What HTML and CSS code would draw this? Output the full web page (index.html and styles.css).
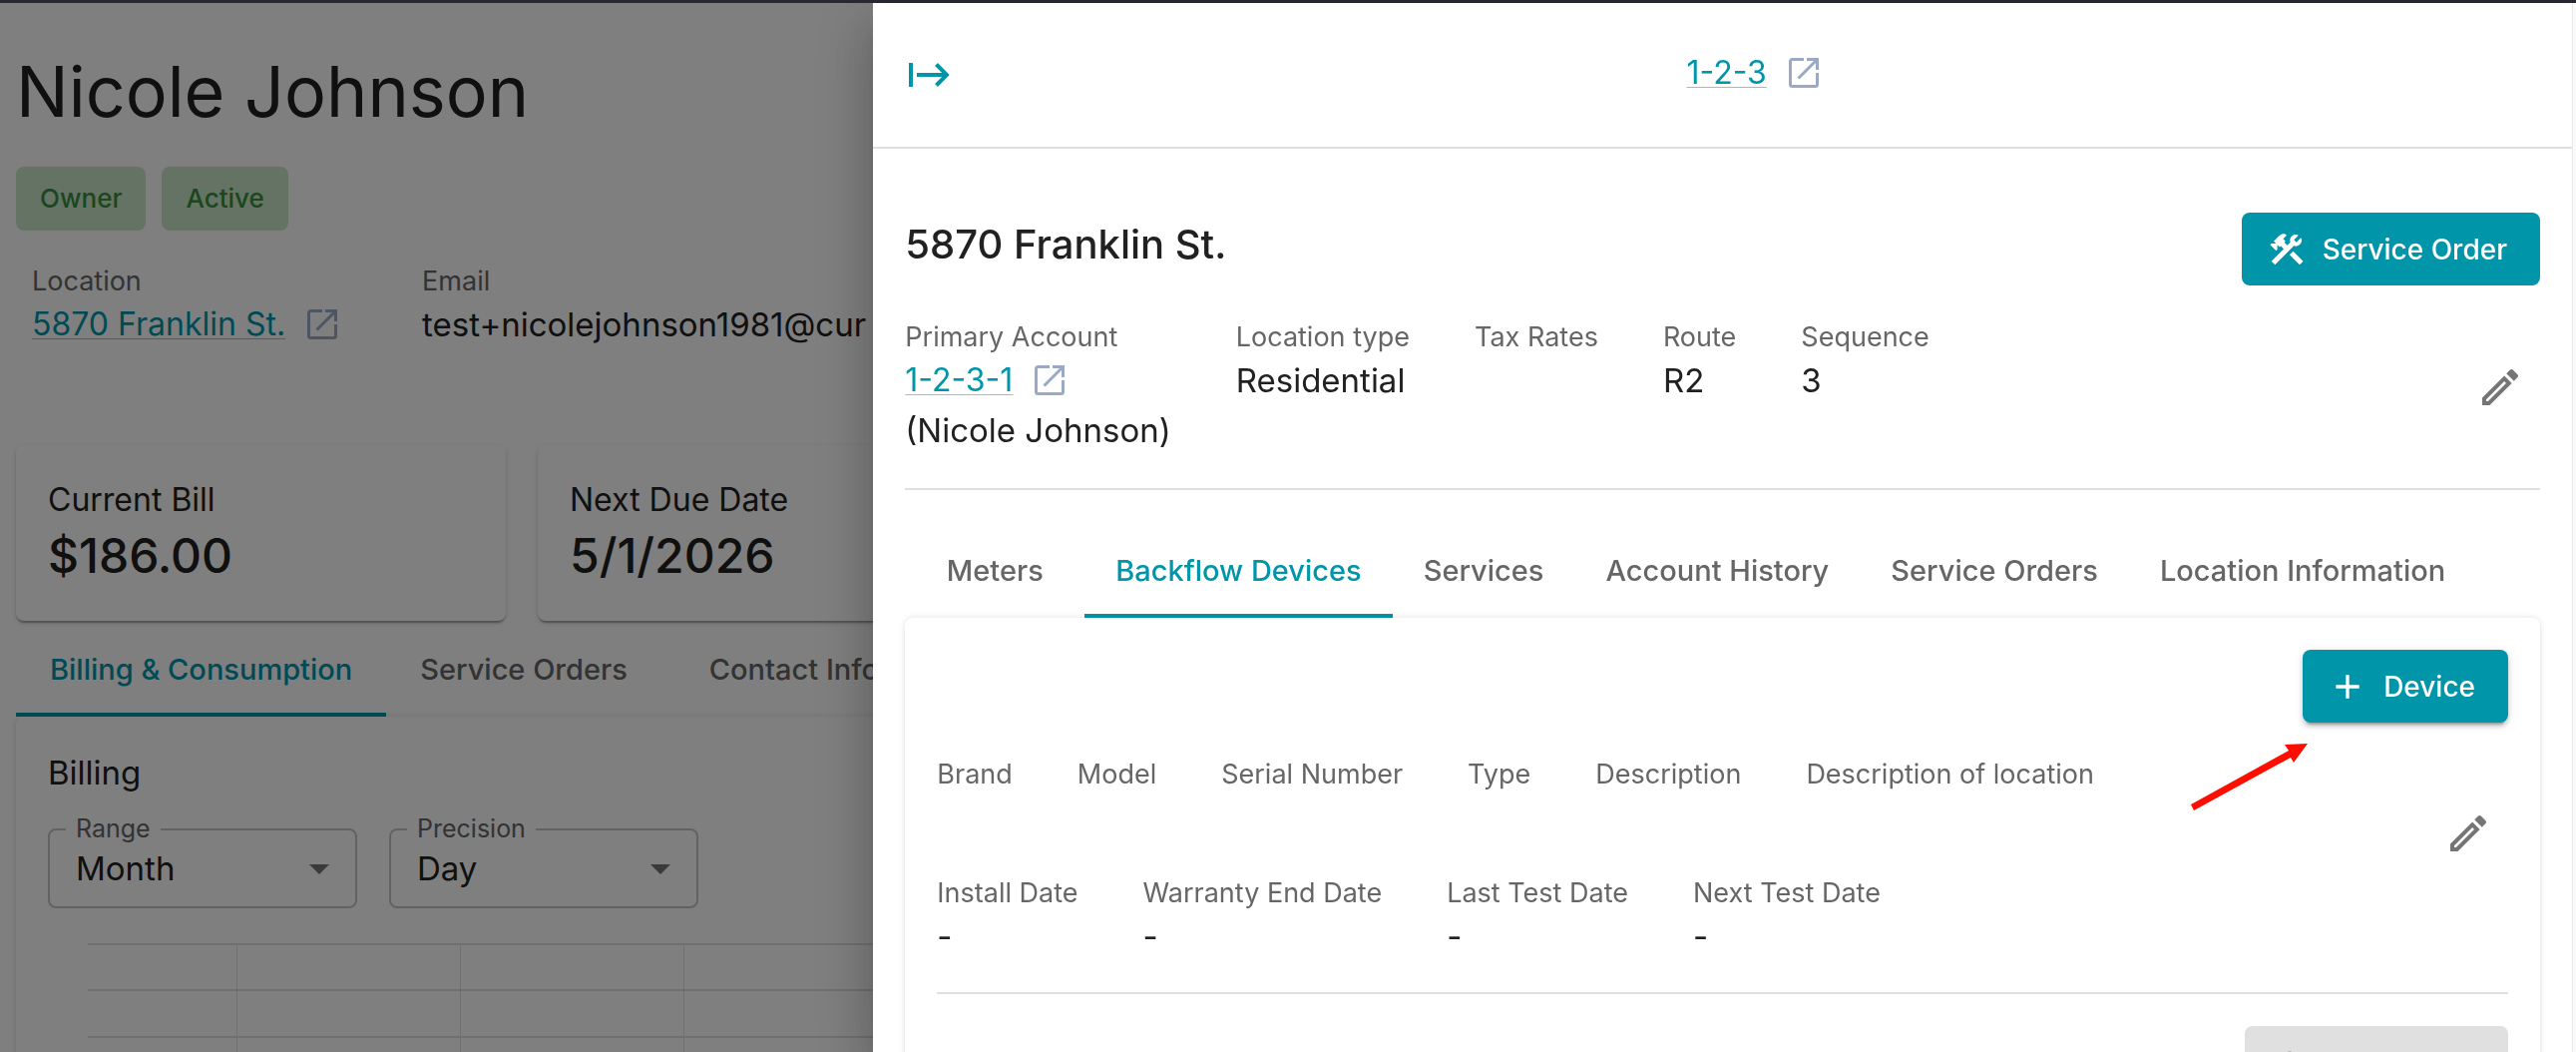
FILE: index.html
```html
<!DOCTYPE html>
<html lang="en">
<head>
	<meta charset="UTF-8">
	<title>Nicole Johnson</title>
	<link rel="stylesheet" href="styles.css">
</head>
<body>
<!-- shared icons -->
<svg class="sprite" aria-hidden="true">
	<symbol id="icon-open" viewBox="0 0 30 30">
		<path fill="none" stroke="currentColor" stroke-width="3" d="M15 1.5H3.5a2 2 0 0 0-2 2v23a2 2 0 0 0 2 2h23a2 2 0 0 0 2-2V15M18 1.5h10.5V12M28 2 9.5 20.5"/>
	</symbol>
	<symbol id="icon-edit" viewBox="0 0 24 24">
		<path fill="currentColor" d="m14.06 9.02.92.92L5.92 19H5v-.92l9.06-9.06M17.66 3c-.25 0-.51.1-.7.29l-1.83 1.83 3.75 3.75 1.83-1.83c.39-.39.39-1.02 0-1.41l-2.34-2.34c-.2-.2-.45-.29-.71-.29zm-3.6 3.19L3 17.25V21h3.75L17.81 9.94l-3.75-3.75z"/>
	</symbol>
	<symbol id="icon-plus" viewBox="0 0 24 24">
		<path fill="currentColor" d="M19 13h-6v6h-2v-6H5v-2h6V5h2v6h6v2z"/>
	</symbol>
	<symbol id="icon-down" viewBox="0 0 20 10">
		<path fill="currentColor" d="M0 0h20L10 10z"/>
	</symbol>
</svg>

<div class="page">
	<main class="account">
		<h1 class="name">Nicole Johnson</h1>
		<div class="chips">
			<span class="chip">Owner</span>
			<span class="chip">Active</span>
		</div>
		<div class="facts account-facts">
			<div class="fact">
				<div class="label">Location</div>
				<div class="value linked"><a href="#">5870 Franklin St.</a><svg class="open"><use href="#icon-open"/></svg></div>
			</div>
			<div class="fact">
				<div class="label">Email</div>
				<div class="value">test+nicolejohnson1981@cur</div>
			</div>
		</div>
		<div class="cards">
			<div class="card">
				<div class="card-title">Current Bill</div>
				<div class="card-value">$186.00</div>
			</div>
			<div class="card">
				<div class="card-title">Next Due Date</div>
				<div class="card-value">5/1/2026</div>
			</div>
		</div>
		<div class="tabs" role="tablist">
			<button class="tab current" role="tab">Billing &amp; Consumption</button>
			<button class="tab" role="tab">Service Orders</button>
			<button class="tab contact" role="tab">Contact Info</button>
		</div>
		<section class="panel billing">
			<h2 class="billing-title">Billing</h2>
			<div class="selects">
				<div class="select">
					<label for="range">Range</label>
					<select id="range"><option>Month</option></select>
					<svg class="down"><use href="#icon-down"/></svg>
				</div>
				<div class="select">
					<label for="precision">Precision</label>
					<select id="precision"><option>Day</option></select>
					<svg class="down"><use href="#icon-down"/></svg>
				</div>
			</div>
			<svg class="chart">
				<g class="rows">
					<line x1="0" x2="100%" y1="1" y2="1"/>
					<line x1="0" x2="100%" y1="47" y2="47"/>
					<line x1="0" x2="100%" y1="94" y2="94"/>
				</g>
				<g class="cols">
					<line x1="149.5" x2="149.5" y1="0" y2="100%"/>
					<line x1="373.5" x2="373.5" y1="0" y2="100%"/>
					<line x1="597.5" x2="597.5" y1="0" y2="100%"/>
				</g>
			</svg>
		</section>
	</main>
</div>

<div class="backdrop"></div>

<aside class="drawer">
	<div class="drawer-main">
		<header class="drawer-head">
			<button class="collapse" aria-label="Close">
				<svg viewBox="0 0 40 24"><path fill="none" stroke="currentColor" stroke-width="4" d="M2 0v24M8 12h30M27.5 1.5 38 12 27.5 22.5"/></svg>
			</button>
			<div class="value linked head-link"><a href="#">1-2-3</a><svg class="open"><use href="#icon-open"/></svg></div>
		</header>
		<div class="drawer-body">
			<div class="title-row">
				<h2 class="title">5870 Franklin St.</h2>
				<button class="btn">
					<svg class="btn-icon" viewBox="0 0 24 24">
						<path fill="currentColor" d="m13.783 15.172 2.121-2.121 5.996 5.996-2.121 2.121z"/>
						<path fill="currentColor" d="M17.5 10c1.93 0 3.5-1.57 3.5-3.5 0-.58-.16-1.12-.41-1.6l-2.7 2.7-1.49-1.49 2.7-2.7c-.48-.25-1.02-.41-1.6-.41C15.57 3 14 4.57 14 6.5c0 .41.08.8.21 1.16l-1.85 1.85-1.78-1.78.71-.71-1.41-1.41L12 3.49c-1.17-1.17-3.07-1.17-4.24 0L4.22 7.03l1.41 1.41H2.81l-.71.71 3.54 3.54.71-.71V9.15l1.41 1.41.71-.71 1.78 1.78-7.41 7.41 2.12 2.12L16.34 9.79c.36.13.75.21 1.16.21z"/>
					</svg>
					Service Order
				</button>
			</div>
			<div class="info-row">
				<div class="facts">
					<div class="fact">
						<div class="label">Primary Account</div>
						<div class="value linked"><a href="#">1-2-3-1</a><svg class="open"><use href="#icon-open"/></svg></div>
						<div class="value">(Nicole Johnson)</div>
					</div>
					<div class="fact">
						<div class="label">Location type</div>
						<div class="value">Residential</div>
					</div>
					<div class="fact">
						<div class="label">Tax Rates</div>
					</div>
					<div class="fact">
						<div class="label">Route</div>
						<div class="value">R2</div>
					</div>
					<div class="fact">
						<div class="label">Sequence</div>
						<div class="value">3</div>
					</div>
				</div>
				<button class="edit" aria-label="Edit location"><svg><use href="#icon-edit"/></svg></button>
			</div>
			<hr>
			<div class="tabs drawer-tabs" role="tablist">
				<button class="tab" role="tab">Meters</button>
				<button class="tab current" role="tab">Backflow Devices</button>
				<button class="tab" role="tab">Services</button>
				<button class="tab" role="tab">Account History</button>
				<button class="tab" role="tab">Service Orders</button>
				<button class="tab" role="tab">Location Information</button>
			</div>
			<section class="panel devices">
				<button class="btn raised"><svg class="btn-icon"><use href="#icon-plus"/></svg>Device</button>
				<svg class="pointer" viewBox="0 0 117 67"><path fill="#ff0d00" d="M0 61 98 7 94 1 117 0 103 19 100 14 3 67z"/></svg>
				<div class="device">
					<div class="device-facts">
						<div class="facts">
							<div class="fact"><div class="label">Brand</div></div>
							<div class="fact"><div class="label">Model</div></div>
							<div class="fact"><div class="label">Serial Number</div></div>
							<div class="fact"><div class="label">Type</div></div>
							<div class="fact"><div class="label">Description</div></div>
							<div class="fact"><div class="label">Description of location</div></div>
						</div>
						<div class="facts">
							<div class="fact"><div class="label">Install Date</div><div class="value">-</div></div>
							<div class="fact"><div class="label">Warranty End Date</div><div class="value">-</div></div>
							<div class="fact"><div class="label">Last Test Date</div><div class="value">-</div></div>
							<div class="fact"><div class="label">Next Test Date</div><div class="value">-</div></div>
						</div>
					</div>
					<button class="edit" aria-label="Edit device"><svg><use href="#icon-edit"/></svg></button>
				</div>
				<hr>
				<button class="btn disabled" aria-label="Add" disabled><svg class="btn-icon"><use href="#icon-plus"/></svg></button>
			</section>
		</div>
	</div>
	<div class="track"></div>
</aside>
</body>
</html>
```

FILE: styles.css
```css
*{box-sizing: border-box;}
body{
margin: 0;height: 100vh;overflow: hidden;
border-top: 3px solid #2a2932;
font-family: Inter, "Open Sans", sans-serif;
color: #212121;background: #ffffff;
}
h1,h2{margin: 0;font-weight: 400;}
hr{width: 100%;height: 2px;margin: 0;border: 0;background: #e0e0e0;}
button{
margin: 0;padding: 0;border: 0;background: none;
font-family: inherit;color: inherit;
}
svg{display: block;flex: none;}
.sprite{position: absolute;width: 0;height: 0;}

/* account page */
.page{height: 100%;overflow: hidden;}
.account{padding: 47px 16px 0;}
.name{font-size: 70px;line-height: 84px;}
.chips{display: flex;gap: 16px;margin-top: 33px;}
.chip{
padding: 0 24px;border-radius: 8px;
font-size: 26px;font-weight: 500;line-height: 64px;
color: #388e3c;background: #c8e6c9;
}
.facts{display: flex;gap: 65px;}
.account-facts{padding: 0 16px;margin-top: 33px;gap: 85px;}
.fact{min-height: 86px;white-space: nowrap;}
.label{font-size: 27px;line-height: 36px;color: #666666;}
.value{font-size: 33px;line-height: 50px;}
.linked{display: flex;align-items: center;gap: 22px;font-size: 32px;}
.linked>a{
color: #0195aa;
text-decoration: underline 1px rgba(1,149,170,.5);text-underline-offset: 3px;
}
.open{width: 30px;height: 30px;color: #9ba9c4;}

.cards{display: flex;gap: 32px;margin-top: 96px;}
.card{
flex: 0 0 491px;padding: 32px;border-radius: 8px;
box-shadow: 0 4px 2px -2px rgba(0,0,0,.2), 0 2px 2px rgba(0,0,0,.14), 0 2px 6px rgba(0,0,0,.12);
}
.card-title{font-size: 32px;line-height: 46px;}
.card-value{font-size: 48px;font-weight: 500;line-height: 66px;}

/* tabs */
.tabs{display: flex;}
.tab{
height: 96px;padding: 4px 34px 0;
border-bottom: 4px solid transparent;
font-size: 29px;font-weight: 500;color: #666666;white-space: nowrap;
}
.tab.current{color: #0195aa;border-color: #0195aa;}
.tab.contact{padding-left: 48px;}
.drawer-tabs{margin-top: 32px;}
.drawer-tabs>.tab{min-width: 180px;padding: 4px 31px 0;}
.panel{
padding: 32px;border-radius: 8px;
box-shadow: 0 4px 2px -2px rgba(0,0,0,.2), 0 2px 2px rgba(0,0,0,.06), 0 0 6px rgba(0,0,0,.12);
}

/* billing */
.billing-title{font-size: 33px;line-height: 48px;}
.selects{display: flex;gap: 32px;margin-top: 32px;}
.select{position: relative;width: 310px;}
.select>label{
position: absolute;left: 18px;top: -16px;padding: 0 10px;
font-size: 25px;line-height: 32px;color: #666666;background: #ffffff;
}
.select>select{
display: block;width: 100%;height: 80px;padding: 0 26px;
appearance: none;border: 2px solid #c4c4c4;border-radius: 8px;
font-family: inherit;font-size: 33px;color: #212121;background: none;
}
.down{
position: absolute;right: 28px;top: 36px;
width: 20px;height: 10px;color: #757575;
}
.chart{width: 100%;height: 400px;margin: 35px 0 0 40px;}
.chart line{stroke: #e0e0e0;}
.rows{stroke-width: 2;}

/* drawer */
.backdrop{position: fixed;inset: 3px 0 0 0;background: rgba(0,0,0,.5);}
.drawer{
position: fixed;top: 3px;right: 0;bottom: 0;width: 66.1%;
display: flex;background: #ffffff;
box-shadow: 0 16px 20px -10px rgba(0,0,0,.2), 0 32px 48px 4px rgba(0,0,0,.14), 0 12px 60px 10px rgba(0,0,0,.12);
}
.drawer-main{flex: 1;min-width: 0;overflow: hidden;}
.track{width: 4px;border-left: 1px solid #e8e8e8;background: #fafafa;}
.drawer-head{
display: flex;align-items: center;height: 146px;padding: 0 32px;
border-bottom: 2px solid #e0e0e0;
}
.collapse{width: 60px;padding: 0 4px;color: #0195aa;}
.collapse>svg{width: 40px;height: 24px;}
.head-link{flex: 1;justify-content: center;padding-bottom: 4px;}
.drawer-body{padding: 64px 32px 0;}
.title-row{display: flex;justify-content: space-between;align-items: flex-start;}
.title{font-size: 40px;font-weight: 500;line-height: 64px;}
.btn{
display: flex;align-items: center;gap: 16px;
height: 73px;padding: 0 33px 0 25px;border-radius: 8px;
font-size: 28px;font-weight: 500;color: #ffffff;background: #0195aa;
}
.btn-icon{width: 40px;height: 40px;}
.raised{box-shadow: 0 6px 2px -4px rgba(0,0,0,.2), 0 4px 4px rgba(0,0,0,.14), 0 2px 10px rgba(0,0,0,.12);}
.disabled{width: 264px;margin-top: 32px;color: #a6a6a6;background: #e0e0e0;}
.info-row{
display: flex;justify-content: space-between;align-items: center;
margin: 34px 0 33px;
}
.edit{padding: 16px;color: #757575;}
.edit>svg{width: 48px;height: 48px;}

/* backflow devices */
.devices{
position: relative;height: 600px;
display: flex;flex-direction: column;align-items: flex-end;
}
/* red arrow at the Device button */
.pointer{position: absolute;right: 233px;top: 126px;width: 117px;height: 67px;}
.device{
display: flex;justify-content: space-between;align-items: flex-start;
width: 100%;margin: 34px 0 31px;
}
.device-facts{display: grid;gap: 33px;}
.device>.edit{margin-top: 37px;}
```
